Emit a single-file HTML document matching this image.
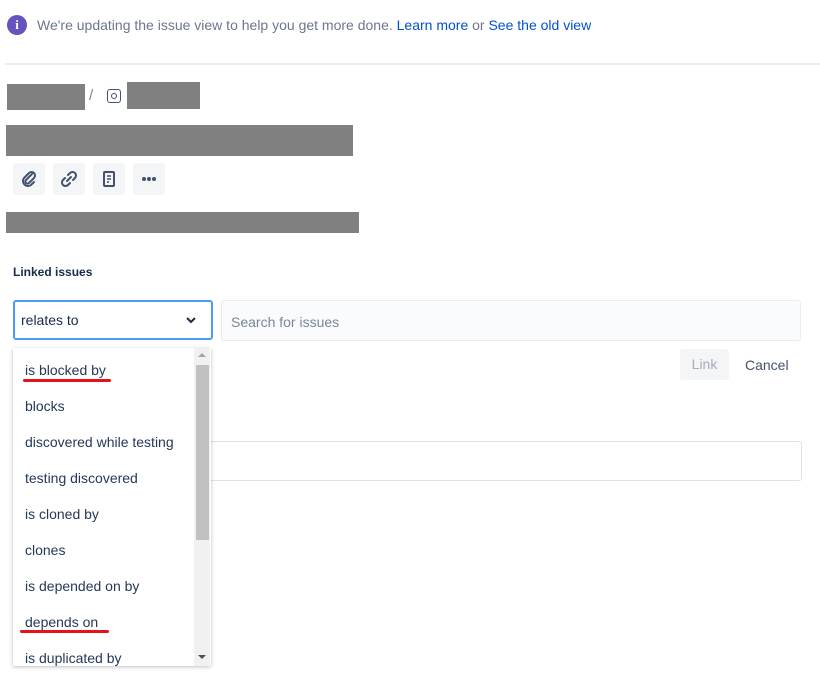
<!DOCTYPE html>
<html><head><style>
body{margin:0;width:820px;height:683px;background:#fff;font-family:"Liberation Sans",sans-serif;position:relative;overflow:hidden;color:#172b4d}
.a{position:absolute}
.g{background:#808080;position:absolute}
.btn{position:absolute;top:163px;width:32px;height:32px;background:#f4f5f7;border-radius:3px;display:flex;align-items:center;justify-content:center}
.it{position:absolute;left:25px;font-size:14px;color:#253858}
.ul{position:absolute;height:3px;background:#e8101a;border-radius:2px}
</style></head><body>
<div class="a" style="left:7px;top:15px;width:20px;height:20px;border-radius:50%;background:#6554c0;color:#fff;font:bold 13px 'Liberation Serif',serif;text-align:center;line-height:20px">i</div>
<div class="a" style="left:37px;top:17px;font-size:14px;color:#6b778c">We're updating the issue view to help you get more done. <span style="color:#0052cc">Learn more</span> or <span style="color:#0052cc">See the old view</span></div>
<div class="a" style="left:5px;top:63px;width:815px;height:2px;background:#ebecf0"></div>
<div class="g" style="left:7px;top:84px;width:78px;height:26px"></div>
<div class="a" style="left:89px;top:87px;font-size:15px;color:#7a869a">/</div>
<div class="a" style="left:107px;top:89px;width:12px;height:12px;border:1.5px solid #42526e;border-radius:3px"><div style="position:absolute;left:3px;top:3px;width:4px;height:4px;border:1.5px solid #42526e;border-radius:50%"></div></div>
<div class="g" style="left:127px;top:82px;width:73px;height:27px"></div>
<div class="g" style="left:6px;top:125px;width:347px;height:31px"></div>
<div class="btn" style="left:13px"><svg width="20" height="20" viewBox="0 0 20 20"><path d="M13 5 L7 11 a2 2 0 0 0 3 3 L15 9 a3.5 3.5 0 0 0 -5 -5 L5 9 a5 5 0 0 0 7 7 L15 13" fill="none" stroke="#42526e" stroke-width="2" stroke-linecap="round"/></svg></div>
<div class="btn" style="left:53px"><svg width="20" height="20" viewBox="0 0 20 20"><path d="M9 6 L11 4 a3 3 0 0 1 5 5 L14 11 M11 14 L9 16 a3 3 0 0 1 -5 -5 L6 9 M8 12 L12 8" fill="none" stroke="#42526e" stroke-width="2" stroke-linecap="round"/></svg></div>
<div class="btn" style="left:93px"><svg width="20" height="20" viewBox="0 0 20 20"><rect x="5" y="3" width="10" height="14" rx="1" fill="none" stroke="#42526e" stroke-width="2"/><path d="M8 7h4M8 10h4M8 13h2" stroke="#42526e" stroke-width="1.6"/></svg></div>
<div class="btn" style="left:133px"><svg width="20" height="20"><circle cx="5" cy="10" r="2" fill="#42526e"/><circle cx="10" cy="10" r="2" fill="#42526e"/><circle cx="15" cy="10" r="2" fill="#42526e"/></svg></div>
<div class="g" style="left:6px;top:212px;width:353px;height:21px"></div>
<div class="a" style="left:13px;top:265px;font-size:12px;font-weight:bold;color:#172b4d">Linked issues</div>
<div class="a" style="left:13px;top:300px;width:196px;height:36px;border:2px solid #4c9aff;border-radius:3px;background:#fff"><span style="position:absolute;left:6px;top:10px;font-size:14px">relates to</span><svg class="a" style="left:170px;top:13px" width="12" height="10"><path d="M2 3 L6 7 L10 3" fill="none" stroke="#172b4d" stroke-width="2"/></svg></div>
<div class="a" style="left:221px;top:300px;width:578px;height:39px;border:1px solid #ebecf0;border-radius:3px;background:#fafbfc"><span style="position:absolute;left:9px;top:13px;font-size:14px;color:#7a869a">Search for issues</span></div>
<div class="a" style="left:680px;top:349px;width:49px;height:31px;background:#f4f5f7;border-radius:3px;color:#a5adba;font-size:14px;text-align:center;line-height:31px">Link</div>
<div class="a" style="left:745px;top:357px;font-size:14px;color:#42526e">Cancel</div>
<div class="a" style="left:13px;top:441px;width:787px;height:38px;border:1px solid #dfe1e6;border-radius:3px"></div>
<div class="a" style="left:13px;top:348px;width:198px;height:318px;background:#fff;box-shadow:0 1px 4px rgba(0,0,0,.25);overflow:hidden">
<div class="a" style="left:181px;top:0;width:16px;height:318px;background:#f1f1f1"></div>
<div class="a" style="left:183px;top:17px;width:13px;height:175px;background:#c1c1c1"></div>
<div class="a" style="left:185px;top:5px;width:0;height:0;border:4px solid transparent;border-bottom-color:#a3a3a3;border-top:0"></div>
<div class="a" style="left:185px;top:307px;width:0;height:0;border:4px solid transparent;border-top-color:#505050;border-bottom:0"></div>
</div>
<div class="it" style="top:362px">is blocked by</div>
<div class="it" style="top:398px">blocks</div>
<div class="it" style="top:434px">discovered while testing</div>
<div class="it" style="top:470px">testing discovered</div>
<div class="it" style="top:506px">is cloned by</div>
<div class="it" style="top:542px">clones</div>
<div class="it" style="top:578px">is depended on by</div>
<div class="it" style="top:614px">depends on</div>
<div class="it" style="top:650px">is duplicated by</div>
<div class="ul" style="left:23px;top:379px;width:88px"></div>
<div class="ul" style="left:20px;top:630px;width:89px"></div>
</body></html>
